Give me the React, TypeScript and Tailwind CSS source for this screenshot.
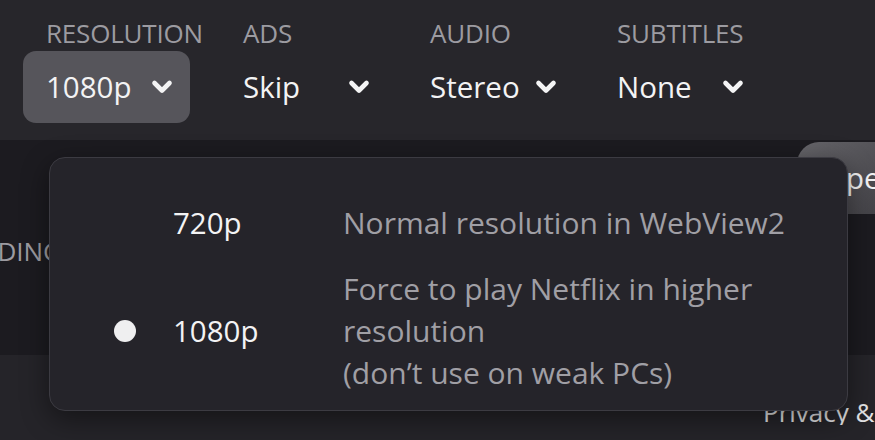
const FONT = { fontFamily: '"Open Sans", "Noto Sans", sans-serif' };

type Setting = { label: string; value: string; open?: boolean; gap: string };

const SETTINGS: Setting[] = [
  { label: 'RESOLUTION', value: '1080p', open: true, gap: 'ml-[23px]' },
  { label: 'ADS', value: 'Skip', gap: 'ml-[30px]' },
  { label: 'AUDIO', value: 'Stereo', gap: 'ml-[20px]' },
  { label: 'SUBTITLES', value: 'None', gap: 'ml-[20px]' },
];

const OPTIONS = [
  { value: '720p', desc: ['Normal resolution in WebView2'] },
  {
    value: '1080p',
    desc: ['Force to play Netflix in higher', 'resolution', '(don’t use on weak PCs)'],
    selected: true,
  },
];

function Chevron() {
  return (
    <svg width="22" height="16" viewBox="0 0 22 16" className="shrink-0">
      <polyline
        points="3.5,4 11,11.5 18.5,4"
        fill="none"
        stroke="#f4f4f5"
        strokeWidth="4.6"
        strokeLinecap="round"
        strokeLinejoin="round"
      />
    </svg>
  );
}

function SettingSelect({ setting }: { setting: Setting }) {
  return (
    <div className={`flex w-[167px] flex-col ${setting.gap}`}>
      <span className="whitespace-nowrap pl-[23px] text-[26px] leading-[32px] tracking-[-0.2px] text-[#9c9ba1]">
        {setting.label}
      </span>
      <div
        className={`mt-[2px] flex h-[72px] items-center justify-between rounded-[13px] pl-[23px] pr-[17px] ${
          setting.open ? 'bg-[#56555b]' : ''
        }`}
      >
        <span className="text-[29.5px] leading-none text-[#f3f3f4]">{setting.value}</span>
        <Chevron />
      </div>
    </div>
  );
}

export default function App() {
  return (
    <div style={FONT} className="relative h-[440px] w-[875px] overflow-hidden bg-[#252429]">
      <div className="flex h-[140px] bg-[#27262b] pt-[17px]">
        {SETTINGS.map((s) => (
          <SettingSelect key={s.label} setting={s} />
        ))}
      </div>

      <div className="flex h-[215px] bg-[#1c1b20]">
        <div className="flex w-[62px] items-center justify-end overflow-hidden whitespace-nowrap pt-[8px] text-[26px] text-[#9c9ba1]">
          LOADING
        </div>
        <div className="flex-1" />
        <div className="mt-[2px] flex h-[72px] w-[78px] items-center overflow-hidden whitespace-nowrap rounded-tl-[22px] bg-gradient-to-br from-[#67666b] to-[#444348] pl-[26px] text-[29.5px] text-[#f3f3f4]">
          Open
        </div>
      </div>

      <div className="mt-[44px] overflow-hidden whitespace-nowrap pl-[763px] text-[26px] leading-none text-[#e4e4e6]">
        Privacy &amp; Terms
      </div>

      <div className="absolute left-[49px] top-[157px] h-[254px] w-[799px] rounded-[16px] border-[1.5px] border-[#3c3b42] bg-[#25242a] pb-[16px] pt-[44px] shadow-[0_8px_28px_rgba(0,0,0,0.45)]">
        <div className="flex flex-col gap-[24px]">
          {OPTIONS.map((o) => (
            <div key={o.value} className="flex items-center">
              <div className="flex w-[123px] justify-end pr-[37px]">
                {o.selected && <span className="h-[22px] w-[22px] rounded-full bg-[#efeff0]" />}
              </div>
              <span className="w-[170px] text-[29.5px] leading-[42px] text-[#f3f3f4]">{o.value}</span>
              <div className="flex flex-col whitespace-nowrap text-[30px] leading-[42px] text-[#a09fa5]">
                {o.desc.map((d) => (
                  <span key={d}>{d}</span>
                ))}
              </div>
            </div>
          ))}
        </div>
      </div>
    </div>
  );
}
